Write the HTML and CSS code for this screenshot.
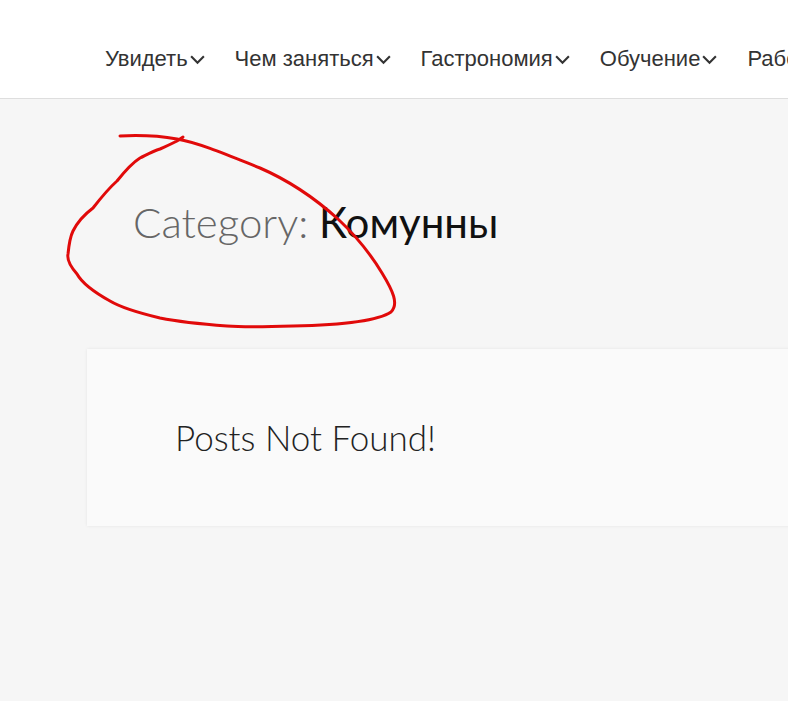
FILE: index.html
```html
<!DOCTYPE html>
<html lang="ru">
<head>
    <meta charset="UTF-8">
    <meta name="viewport" content="width=device-width, initial-scale=1">
    <title>Category: Комунны</title>
    <link rel="stylesheet" href="styles.css">
</head>
<body>
    <header class="site-header">
        <nav class="main-nav">
            <a class="nav-item" href="#">Увидеть<svg class="chev" viewBox="0 0 16 10"><path d="M2 2l6 6 6-6"/></svg></a>
            <a class="nav-item" href="#">Чем заняться<svg class="chev" viewBox="0 0 16 10"><path d="M2 2l6 6 6-6"/></svg></a>
            <a class="nav-item" href="#">Гастрономия<svg class="chev" viewBox="0 0 16 10"><path d="M2 2l6 6 6-6"/></svg></a>
            <a class="nav-item" href="#">Обучение<svg class="chev" viewBox="0 0 16 10"><path d="M2 2l6 6 6-6"/></svg></a>
            <a class="nav-item" href="#">Работа<svg class="chev" viewBox="0 0 16 10"><path d="M2 2l6 6 6-6"/></svg></a>
        </nav>
    </header>
    <main class="content">
        <h1 class="page-title"><span class="title-label">Category:</span> Комунны</h1>
        <section class="no-posts">
            <p>Posts Not Found!</p>
        </section>
        <!-- hand-drawn mark over the title -->
        <svg class="scribble" width="788" height="603" viewBox="0 98 788 603">
            <path d="M120,135 C140,134 160,135 177,138 C200,142 230,155 260,167 C290,180 318,200 338,218 C355,234 370,252 382,272 C393,290 399,303 391,311 C378,320 340,324 293,325 C260,326 240,326 227,325 C200,323 180,321 160,317 C135,311 120,306 110,300 C92,290 82,282 77,273 C70,265 67,258 68,253 C69,243 70,236 73,230 C78,220 85,213 93,207 C100,198 108,188 117,180 C125,170 132,162 140,157 C148,153 153,150 160,148 C167,145 173,142 177,140 L183,136"/>
        </svg>
    </main>
</body>
</html>
```

FILE: styles.css
```css
* {
    margin: 0;
    padding: 0;
    box-sizing: border-box;
}

html, body {
    height: 100%;
}

body {
    background: #f6f6f6;
    font-family: "Lato", "Liberation Sans", sans-serif;
    overflow: hidden;
}

.site-header {
    height: 99px;
    background: #ffffff;
    border-bottom: 1px solid #dedede;
    display: flex;
    align-items: flex-start;
    padding: 46px 0 0 105px;
}

.main-nav {
    display: flex;
    gap: 29px;
    white-space: nowrap;
}

.nav-item {
    display: flex;
    align-items: center;
    font-family: "Liberation Sans", Arial, sans-serif;
    font-size: 22px;
    line-height: 26px;
    color: #333333;
    text-decoration: none;
}

.chev {
    width: 17px;
    height: 11px;
    margin-left: 1px;
    margin-top: 1px;
    fill: none;
    stroke: #333333;
    stroke-width: 2;
}

.content {
    position: relative;
    height: 602px;
}

.page-title {
    padding: 97px 0 0 133px;
    height: 250px;
    font-size: 42px;
    font-weight: 400;
    color: #111111;
    line-height: 52px;
}

.title-label {
    font-weight: 300;
    color: #666666;
}

.no-posts {
    margin-left: 87px;
    margin-right: -20px;
    height: 177px;
    background: #fafafa;
    box-shadow: 0 0 3px rgba(0, 0, 0, 0.08);
    padding: 64px 0 0 88px;
}

.no-posts p {
    font-size: 35px;
    font-weight: 300;
    color: #222222;
    line-height: 48px;
}

.scribble {
    position: absolute;
    left: 0;
    top: 0;
    fill: none;
    stroke: #e10a0a;
    stroke-width: 3;
    stroke-linecap: round;
    stroke-linejoin: round;
}
```
